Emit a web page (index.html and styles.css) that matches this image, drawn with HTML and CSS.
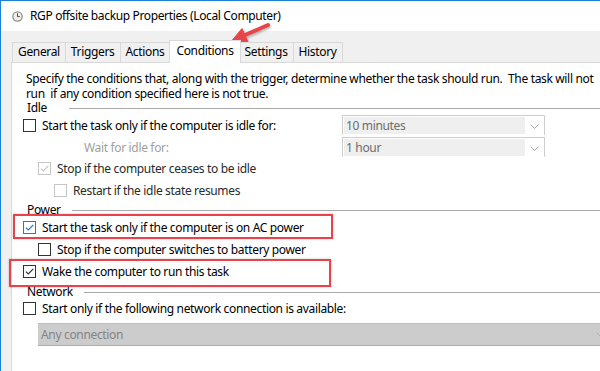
FILE: index.html
```html
<!DOCTYPE html>
<html lang="en">
<head>
<meta charset="utf-8">
<title>RGP offsite backup Properties (Local Computer)</title>
<link rel="stylesheet" href="styles.css">
</head>
<body>
<div class="window">
  <div class="titlebar">
    <svg class="app-icon" width="11" height="11" viewBox="0 0 11 11" aria-hidden="true">
      <circle cx="5.5" cy="5.5" r="5.3" fill="#8c8c8c"/>
      <circle cx="5.5" cy="5.5" r="4" fill="#f3f1e6"/>
      <path d="M5.5 2.4 V5.6 H7.8" fill="none" stroke="#4a4a4a" stroke-width="1"/>
    </svg>
    <span class="title">RGP offsite backup Properties (Local Computer)</span>
  </div>

  <div class="client">
    <div class="tabs">
      <div class="tab">General</div>
      <div class="tab">Triggers</div>
      <div class="tab">Actions</div>
      <div class="tab active">Conditions</div>
      <div class="tab">Settings</div>
      <div class="tab">History</div>
    </div>

    <div class="panel">
      <p class="desc">Specify the conditions that, along with the trigger, determine whether the task should run.&nbsp; The task will not<br>run&nbsp; if any condition specified here is not true.</p>

      <div class="group-head"><span class="group-label">Idle</span><span class="group-line"></span></div>

      <div class="field-row">
        <div class="row">
          <span class="cb"></span>
          <span>Start the task only if the computer is idle for:</span>
        </div>
        <div class="combo">
          <span class="combo-value">10 minutes</span>
          <span class="combo-arrow"><svg width="9" height="5" viewBox="0 0 9 5"><path d="M0.5 0.5 L4.5 4.5 L8.5 0.5" fill="none" stroke="#a8a8a8" stroke-width="1"/></svg></span>
        </div>
      </div>

      <div class="field-row wait">
        <div class="row">
          <span class="label-disabled wait-label">Wait for idle for:</span>
        </div>
        <div class="combo">
          <span class="combo-value">1 hour</span>
          <span class="combo-arrow"><svg width="9" height="5" viewBox="0 0 9 5"><path d="M0.5 0.5 L4.5 4.5 L8.5 0.5" fill="none" stroke="#a8a8a8" stroke-width="1"/></svg></span>
        </div>
      </div>

      <div class="row indent-1 stop-row">
        <span class="cb cb-disabled"><svg width="11" height="11" viewBox="0 0 11 11"><path d="M1.8 5.6 L4.3 8 L9.3 2.8" fill="none" stroke="#c2c2c2" stroke-width="1.1"/></svg></span>
        <span class="label-dim">Stop if the computer ceases to be idle</span>
      </div>

      <div class="row indent-2 restart-row">
        <span class="cb cb-disabled"></span>
        <span class="label-dim">Restart if the idle state resumes</span>
      </div>

      <div class="group-head power-head"><span class="group-label">Power</span><span class="group-line"></span></div>

      <div class="highlight highlight-ac">
        <div class="row">
          <span class="cb cb-blue"><svg width="11" height="11" viewBox="0 0 11 11"><path d="M1.8 5.6 L4.3 8 L9.3 2.8" fill="none" stroke="#1a7ad4" stroke-width="1.2"/></svg></span>
          <span>Start the task only if the computer is on AC power</span>
        </div>
      </div>

      <div class="row indent-1">
        <span class="cb"></span>
        <span>Stop if the computer switches to battery power</span>
      </div>

      <div class="highlight highlight-wake">
        <div class="row wake-row">
          <span class="cb"><svg width="11" height="11" viewBox="0 0 11 11"><path d="M1.8 5.6 L4.3 8 L9.3 2.8" fill="none" stroke="#333" stroke-width="1.2"/></svg></span>
          <span>Wake the computer to run this task</span>
        </div>
      </div>

      <div class="group-head network-head"><span class="group-label">Network</span><span class="group-line"></span></div>

      <div class="row network-row">
        <span class="cb"></span>
        <span>Start only if the following network connection is available:</span>
      </div>

      <div class="combo combo-wide">
        <span class="combo-value">Any connection</span>
        <span class="combo-arrow"><svg width="9" height="5" viewBox="0 0 9 5"><path d="M0.5 0.5 L4.5 4.5 L8.5 0.5" fill="none" stroke="#b0b0b0" stroke-width="1"/></svg></span>
      </div>
    </div>
  </div>
</div>

<svg class="callout-arrow" width="600" height="60" viewBox="0 0 600 60" aria-hidden="true">
  <defs>
    <filter id="shadow" x="-20%" y="-40%" width="140%" height="180%">
      <feDropShadow dx="1" dy="1.5" stdDeviation="1" flood-color="#000" flood-opacity="0.3"/>
    </filter>
  </defs>
  <g filter="url(#shadow)" fill="#e8454b" stroke="#e8454b">
    <line x1="268" y1="25" x2="244" y2="35.5" stroke-width="4" stroke-linecap="round"/>
    <polygon points="231.5,41 242,28.6 247.8,41.6" stroke-width="1" stroke-linejoin="round"/>
  </g>
</svg>
</body>
</html>
```

FILE: styles.css
```css
* {
  box-sizing: border-box;
  margin: 0;
  padding: 0;
}

html,
body {
  width: 600px;
  height: 371px;
  overflow: hidden;
}

body {
  position: relative;
  font-family: "Noto Sans", "Segoe UI", sans-serif;
  font-size: 12px;
  letter-spacing: -0.34px;
  color: #000;
  background: #f0f0f0;
}

.window {
  height: 371px;
  display: flex;
  flex-direction: column;
  border-top: 1px solid #1a83d8;
  border-left: 1px solid #1a83d8;
}

/* Title bar */
.titlebar {
  height: 30px;
  flex: none;
  display: flex;
  align-items: center;
  gap: 7px;
  padding-left: 11px;
  background: #fff;
}

.app-icon {
  flex: none;
}

.title {
  line-height: 16px;
  white-space: nowrap;
  letter-spacing: -0.36px;
}

/* Client area */
.client {
  flex: 1;
  display: flex;
  flex-direction: column;
  padding-left: 10px;
}

.tabs {
  display: flex;
  align-items: flex-end;
  margin-top: 9px;
  margin-bottom: -1px;
  padding-left: 1px;
  position: relative;
  z-index: 1;
}

.tab {
  height: 20px;
  margin-bottom: 1px;
  padding: 0 5px;
  line-height: 18px;
  border: 1px solid #d9d9d9;
  border-bottom: 0;
  background: #f0f0f0;
  white-space: nowrap;
}

.tab + .tab {
  margin-left: -1px;
}

.tab.active {
  height: 23px;
  margin-bottom: 0;
  margin-left: -1px;
  margin-right: -1px;
  padding: 0 6px;
  line-height: 19px;
  background: #fff;
  position: relative;
  z-index: 1;
}

.panel {
  flex: 1;
  background: #fff;
  border-top: 1px solid #d9d9d9;
  border-left: 1px solid #d9d9d9;
  padding-left: 11px;
  display: flex;
  flex-direction: column;
}

.desc {
  padding-top: 8px;
  padding-left: 3px;
  line-height: 15px;
  white-space: nowrap;
}

/* Group headers */
.group-head {
  height: 14px;
  display: flex;
  align-items: center;
  padding-left: 4px;
  line-height: 14px;
}

.group-label {
  min-width: 31px;
  margin-right: 11px;
}

.group-line {
  flex: 1;
  height: 1px;
  margin-top: 1px;
  background: #a9a9a9;
}

.power-head {
  margin-top: 3px;
}

.network-head {
  margin-top: -2px;
}

/* Rows */
.row {
  height: 20px;
  display: flex;
  align-items: center;
  white-space: nowrap;
}

.field-row {
  display: grid;
  grid-template-columns: 319px 203px;
}

.field-row.wait {
  margin-top: 2px;
}

.wait-label {
  padding-left: 61px;
}

.stop-row {
  margin-top: 1px;
}

.restart-row {
  margin-top: 2px;
}

.indent-1 {
  padding-left: 15px;
}

.indent-2 {
  padding-left: 31px;
}

.network-row {
  margin-top: -1px;
}

.label-disabled {
  color: #a0a0a0;
}

.label-dim {
  color: #2a2a2a;
}

/* Checkboxes */
.cb {
  flex: none;
  width: 13px;
  height: 13px;
  margin-right: 6px;
  border: 1px solid #333;
  background: #fff;
  display: flex;
}

.cb-disabled {
  border-color: #c6c6c6;
}

.cb-blue {
  border-color: #1a7ad4;
}

/* Combo boxes */
.combo {
  height: 20px;
  display: flex;
  padding: 1px 0 0 1px;
  border: 1px solid #cdcdcd;
  border-bottom: 0;
  background: #fff;
}

.combo-value {
  flex: 1;
  height: 17px;
  padding-left: 2px;
  line-height: 17px;
  color: #6d6d6d;
  background: #efefef;
}

.combo-arrow {
  width: 19px;
  flex: none;
  display: flex;
  align-items: center;
  justify-content: center;
}

.combo-wide {
  height: 23px;
  margin-top: 5px;
  margin-left: 15px;
  margin-right: -10px;
  padding: 0;
  border: 0;
  border-top: 1px solid #bdbdbd;
  border-bottom: 1px solid #adadad;
  background: #cccccc;
}

.combo-wide .combo-value {
  height: 21px;
  line-height: 21px;
  padding-left: 3px;
  background: transparent;
  color: #848484;
}

/* Red annotation boxes */
.highlight {
  position: relative;
  z-index: 2;
  border: 2px solid #e8434b;
  box-shadow: 0 0 2px rgba(0, 0, 0, 0.25);
}

.highlight-ac {
  width: 320px;
  height: 25px;
  margin-top: -3px;
  margin-left: -10px;
  padding: 1px 0 0 8px;
}

.highlight-wake {
  width: 322px;
  height: 28px;
  margin-left: -14px;
  padding-left: 12px;
}

.wake-row {
  height: 21px;
}

/* Callout arrow */
.callout-arrow {
  position: absolute;
  left: 0;
  top: 0;
  pointer-events: none;
}
```
